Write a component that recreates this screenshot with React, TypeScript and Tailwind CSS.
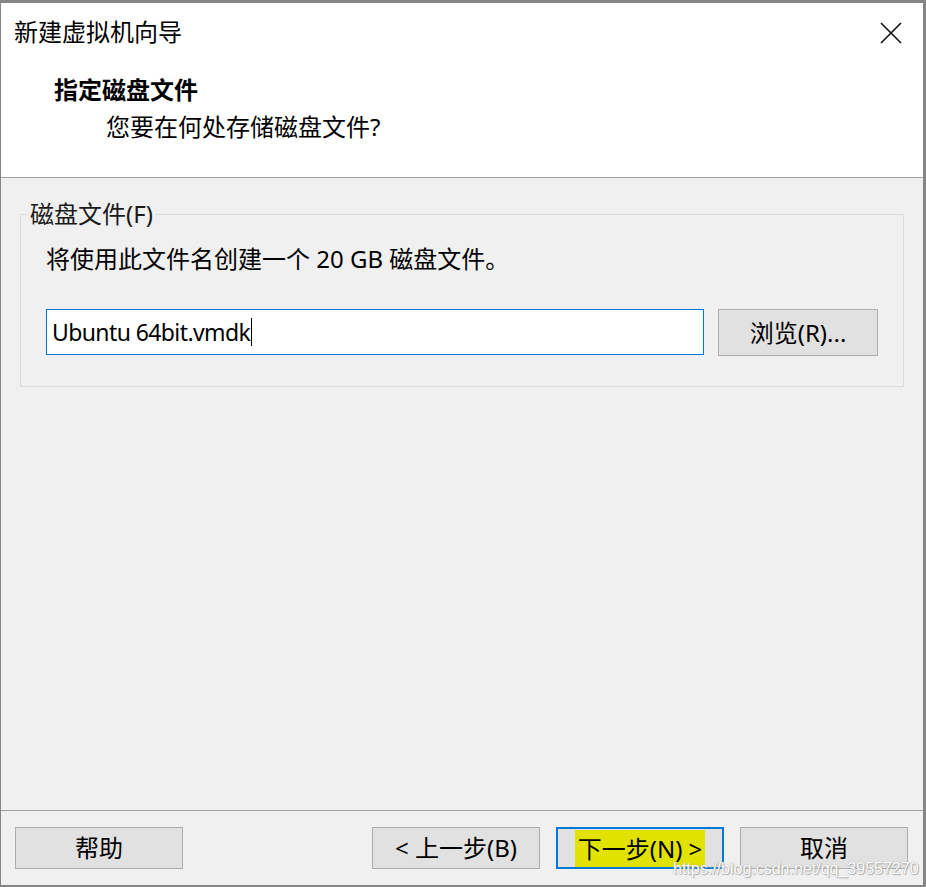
const FONT = "font-['Noto_Sans','Noto_Sans_CJK_SC',sans-serif]";

function Button({ children, primary }: { children: React.ReactNode; primary?: boolean }) {
  return (
    <button
      type="button"
      className={
        "flex h-[42px] w-[168px] items-center justify-center bg-[#e1e1e1] text-[24px] leading-[32px] text-black " +
        (primary ? "border-2 border-[#0078d7]" : "border border-[#adadad]")
      }
    >
      {children}
    </button>
  );
}

export default function App() {
  return (
    <div className={`relative flex h-[887px] w-[926px] flex-col bg-[#4d6577] ${FONT}`}>
      <div className="flex flex-1 flex-col border-t-[3px] border-r-[3px] border-b-2 border-l border-[#858585] bg-[#f0f0f0]">
        {/* header */}
        <div className="flex h-[175px] flex-col border-b border-[#a0a0a0] bg-white">
          <div className="flex items-start justify-between pt-[13px] pl-[13px] pr-[21px]">
            <span className="text-[24px] leading-[32px] text-black">新建虚拟机向导</span>
            <svg width="22" height="22" viewBox="0 0 22 22" className="mt-[6px]">
              <path d="M1 1L21 21M21 1L1 21" stroke="#111" strokeWidth="1.6" fill="none" />
            </svg>
          </div>
          <div className="mt-[26px] pl-[53px] text-[24px] font-bold leading-[32px] text-black">指定磁盘文件</div>
          <div className="mt-[5px] pl-[105px] text-[24px] leading-[32px] text-black">您要在何处存储磁盘文件?</div>
        </div>

        {/* body */}
        <div className="flex-1 px-[19px] pt-[20px]">
          <fieldset className="border border-[#dcdcdc] px-[25px] pb-[30px]">
            <legend className="-ml-[18px] px-[2px] text-[24px] leading-[32px] text-[#1a1a1a]">磁盘文件(F)</legend>
            <div className="mt-[13px] text-[24px] leading-[32px] text-black">将使用此文件名创建一个 20 GB 磁盘文件。</div>
            <div className="mt-[34px] flex gap-[14px]">
              <div className="flex h-[46px] w-[658px] items-center border border-[#0078d7] bg-white pl-[5px] text-[23px] text-black">
                <span className="tracking-[-0.6px]">Ubuntu 64bit.vmdk</span>
                <span className="ml-[1px] h-[28px] w-[1px] bg-black" />
              </div>
              <button
                type="button"
                className="flex h-[47px] w-[160px] items-center justify-center border border-[#adadad] bg-[#e1e1e1] text-[24px] text-black"
              >
                浏览(R)...
              </button>
            </div>
          </fieldset>
        </div>

        {/* footer */}
        <div className="flex h-[75px] items-start border-t border-[#a0a0a0] pt-[16px] pr-[15px] pl-[14px]">
          <Button>帮助</Button>
          <div className="flex-1" />
          <div className="flex gap-[16px]">
            <Button>&lt; 上一步(B)</Button>
            <Button primary>
              <span className="flex h-[37px] items-center bg-[#e2e200] px-[3px] pt-[1px]">下一步(N) &gt;</span>
            </Button>
            <Button>取消</Button>
          </div>
        </div>
      </div>

      {/* watermark */}
      <div className="pointer-events-none absolute top-[857px] left-[673px] whitespace-nowrap font-['Liberation_Sans',sans-serif] text-[16px] text-white [text-shadow:0_0_1px_#8a8a8a,1px_1px_1px_#b0b0b0]">
        https://blog.csdn.net/qq_39557270
      </div>
    </div>
  );
}
